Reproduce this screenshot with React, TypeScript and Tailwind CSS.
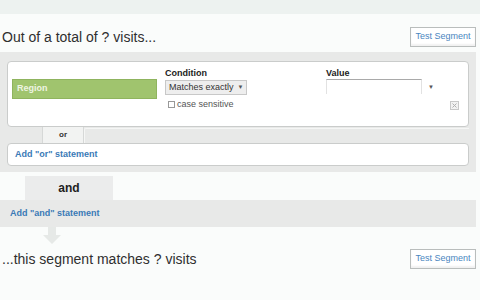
import React from 'react'

const TestButton = () => (
  <button className="h-[20px] w-[66px] border border-[#b9bdbc] bg-white text-[9px] text-[#4a86c0] shadow-[inset_0_-2px_2px_rgba(0,0,0,0.06)]">
    Test Segment
  </button>
)

const App = () => {
  return (
    <div
      className="relative h-[300px] w-[480px] overflow-hidden bg-[#fafcfb] text-[#333]"
      style={{ fontFamily: '"Liberation Sans", Arial, sans-serif' }}
    >
      {/* top band */}
      <div className="h-[14px] bg-[#edf2f0]" />

      {/* header */}
      <div className="mt-[13px] flex h-[20px] items-center justify-between pl-[2px] pr-[4px]">
        <span className="text-[14px] text-[#2f2f2f]">Out of a total of ? visits...</span>
        <TestButton />
      </div>

      {/* or-group panel */}
      <div className="mt-[5px] w-[476px] bg-[#e8e9e8] px-[7px] pb-[6px] pt-[9px]">
        {/* condition card */}
        <div className="flex h-[66px] rounded-[4px] border border-[#cacccb] bg-white pl-[4px] pt-[6px]">
          <div className="w-[145px] pt-[11px]">
            <div className="flex h-[20px] items-center border border-[#8fb45e] bg-[#a0c46e] pl-[4px] text-[9px] font-bold text-[#eef4e2]">
              Region
            </div>
          </div>
          <div className="ml-[8px] w-[161px]">
            <div className="text-[9px] font-bold leading-[11px] text-[#222]">Condition</div>
            <div className="mt-[1px] flex h-[15px] w-[82px] items-center gap-[4px] border border-[#c8c8c8] bg-[#eeeeee] pl-[3px] text-[9px] text-[#333]">
              Matches exactly
              <span className="text-[6px] text-[#555]">▼</span>
            </div>
            <div className="mt-[3px] flex items-center gap-[2px] pl-[3px] text-[9px] text-[#555]">
              <span className="h-[7px] w-[7px] border border-[#999] bg-white" />
              case sensitive
            </div>
          </div>
          <div className="w-[140px]">
            <div className="text-[9px] font-bold leading-[11px] text-[#222]">Value</div>
            <div className="flex items-start">
              <div className="h-[15px] w-[96px] border-x border-t border-x-[#e2e2e2] border-t-[#a9a9a9] bg-white" />
              <span className="ml-[6px] mt-[4px] text-[6px] text-[#555]">▼</span>
            </div>
            <div className="mt-[7px] flex justify-end pr-[7px]">
              <svg width="9" height="9" viewBox="0 0 9 9">
                <rect x="0.5" y="0.5" width="8" height="8" fill="#f2f2f2" stroke="#c8c8c8" />
                <path d="M2.5 2.5 L6.5 6.5 M6.5 2.5 L2.5 6.5" stroke="#b0b0b0" strokeWidth="1" />
              </svg>
            </div>
          </div>
        </div>

        {/* or tab */}
        <div className="flex h-[16px]">
          <div className="w-[35px]" />
          <div className="flex w-[42px] items-center justify-center border-x border-[#d6d8d7] bg-[#f2f3f2] text-[8px] font-bold text-[#333]">
            or
          </div>
          <div className="mt-[1px] flex-1 rounded-tl-[2px] border-l border-t border-[#f5f6f5]" />
        </div>

        {/* add or */}
        <div className="flex h-[23px] items-center rounded-[4px] border border-[#cacccb] bg-white pl-[7px] text-[9px] font-bold text-[#3a7ab6]">
          Add "or" statement
        </div>
      </div>

      {/* and tab */}
      <div className="mt-[4px] flex h-[24px]">
        <div className="ml-[25px] flex w-[88px] items-center justify-center bg-[#ebecec] text-[12px] font-bold text-[#1e1e1e]">
          and
        </div>
      </div>

      {/* add and */}
      <div className="flex h-[27px] w-[476px] items-center bg-[#e8e9e8] pl-[10px] text-[9px] font-bold text-[#3a7ab6]">
        Add "and" statement
      </div>

      {/* arrow */}
      <div className="pl-[43px]">
        <svg width="18" height="17" viewBox="0 0 18 17" className="block">
          <path d="M5 0 H13 V8 H18 L9 17 L0 8 H5 Z" fill="#e6e9e7" />
        </svg>
      </div>

      {/* footer */}
      <div className="mt-[5px] flex h-[20px] items-center justify-between pl-[2px] pr-[4px]">
        <span className="text-[14px] text-[#2f2f2f]">...this segment matches ? visits</span>
        <TestButton />
      </div>
    </div>
  )
}

export default App
